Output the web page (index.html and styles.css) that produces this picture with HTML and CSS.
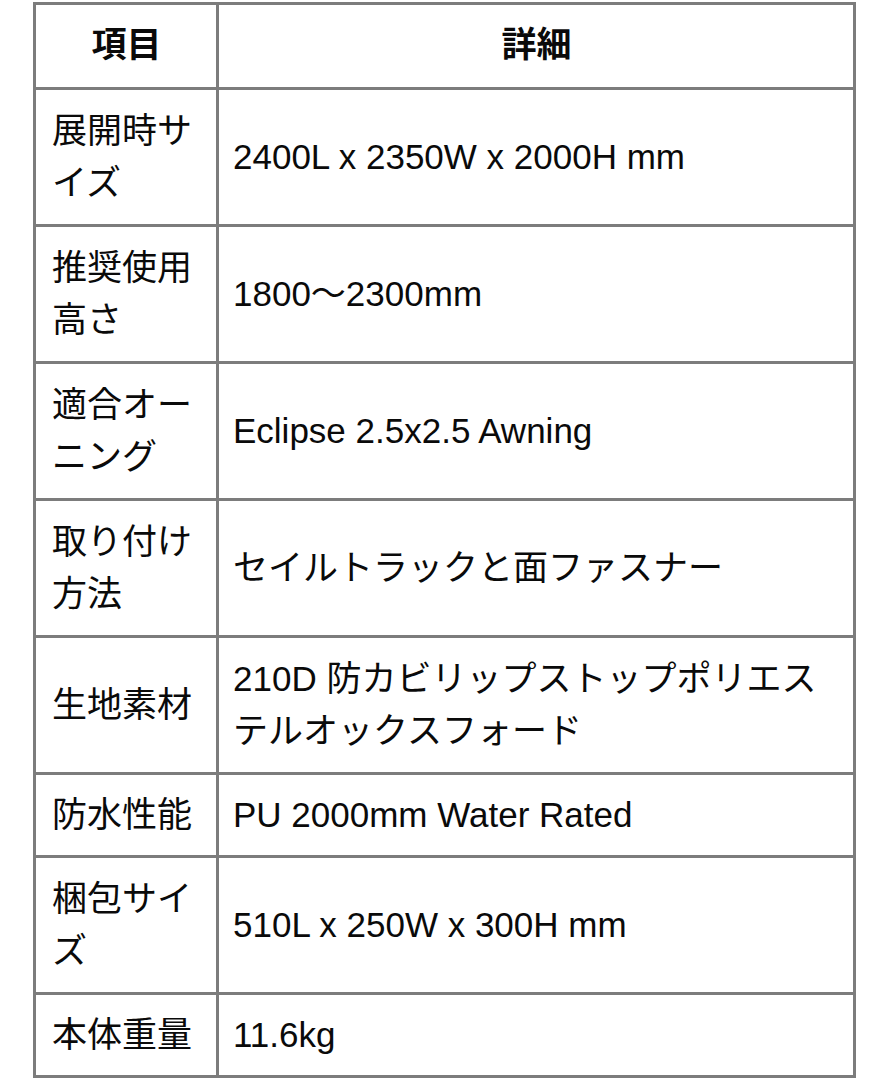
FILE: index.html
```html
<!DOCTYPE html>
<html lang="ja">
<head>
<meta charset="utf-8">
<title>仕様</title>
<link rel="stylesheet" href="styles.css">
</head>
<body>
<table class="spec">
  <colgroup>
    <col class="col-key">
    <col class="col-val">
  </colgroup>
  <thead>
    <tr><th>項目</th><th>詳細</th></tr>
  </thead>
  <tbody>
    <tr><td>展開時サイズ</td><td>2400L x 2350W x 2000H mm</td></tr>
    <tr><td>推奨使用高さ</td><td>1800～2300mm</td></tr>
    <tr><td>適合オーニング</td><td>Eclipse 2.5x2.5 Awning</td></tr>
    <tr><td>取り付け方法</td><td>セイルトラックと面ファスナー</td></tr>
    <tr><td>生地素材</td><td>210D 防カビリップストップポリエステルオックスフォード</td></tr>
    <tr class="single"><td>防水性能</td><td>PU 2000mm Water Rated</td></tr>
    <tr><td>梱包サイズ</td><td>510L x 250W x 300H mm</td></tr>
    <tr class="single"><td>本体重量</td><td>11.6kg</td></tr>
  </tbody>
</table>
</body>
</html>
```

FILE: styles.css
```css
html, body {
  background: #ffffff;
}
body {
  margin: 2px 0 0 33px;
  font-family: "Liberation Sans", "Noto Sans CJK JP", sans-serif;
  font-size: 35px;
  color: #0a0a0a;
}
.spec {
  width: 820px;
  border-collapse: collapse;
  table-layout: fixed;
}
.col-key { width: 183px; }
.col-val { width: 637px; }
.spec th,
.spec td {
  border: 3px solid #7c7c7c;
  padding: 15px 15px 15px 16px;
  line-height: 52px;
  vertical-align: middle;
  text-align: left;
}
.spec th {
  font-weight: 700;
  text-align: center;
  padding-top: 14px;
  padding-bottom: 16px;
}
.spec td:last-child {
  padding-left: 14px;
}
.spec .single td {
  padding-top: 14px;
  padding-bottom: 14px;
}
```
